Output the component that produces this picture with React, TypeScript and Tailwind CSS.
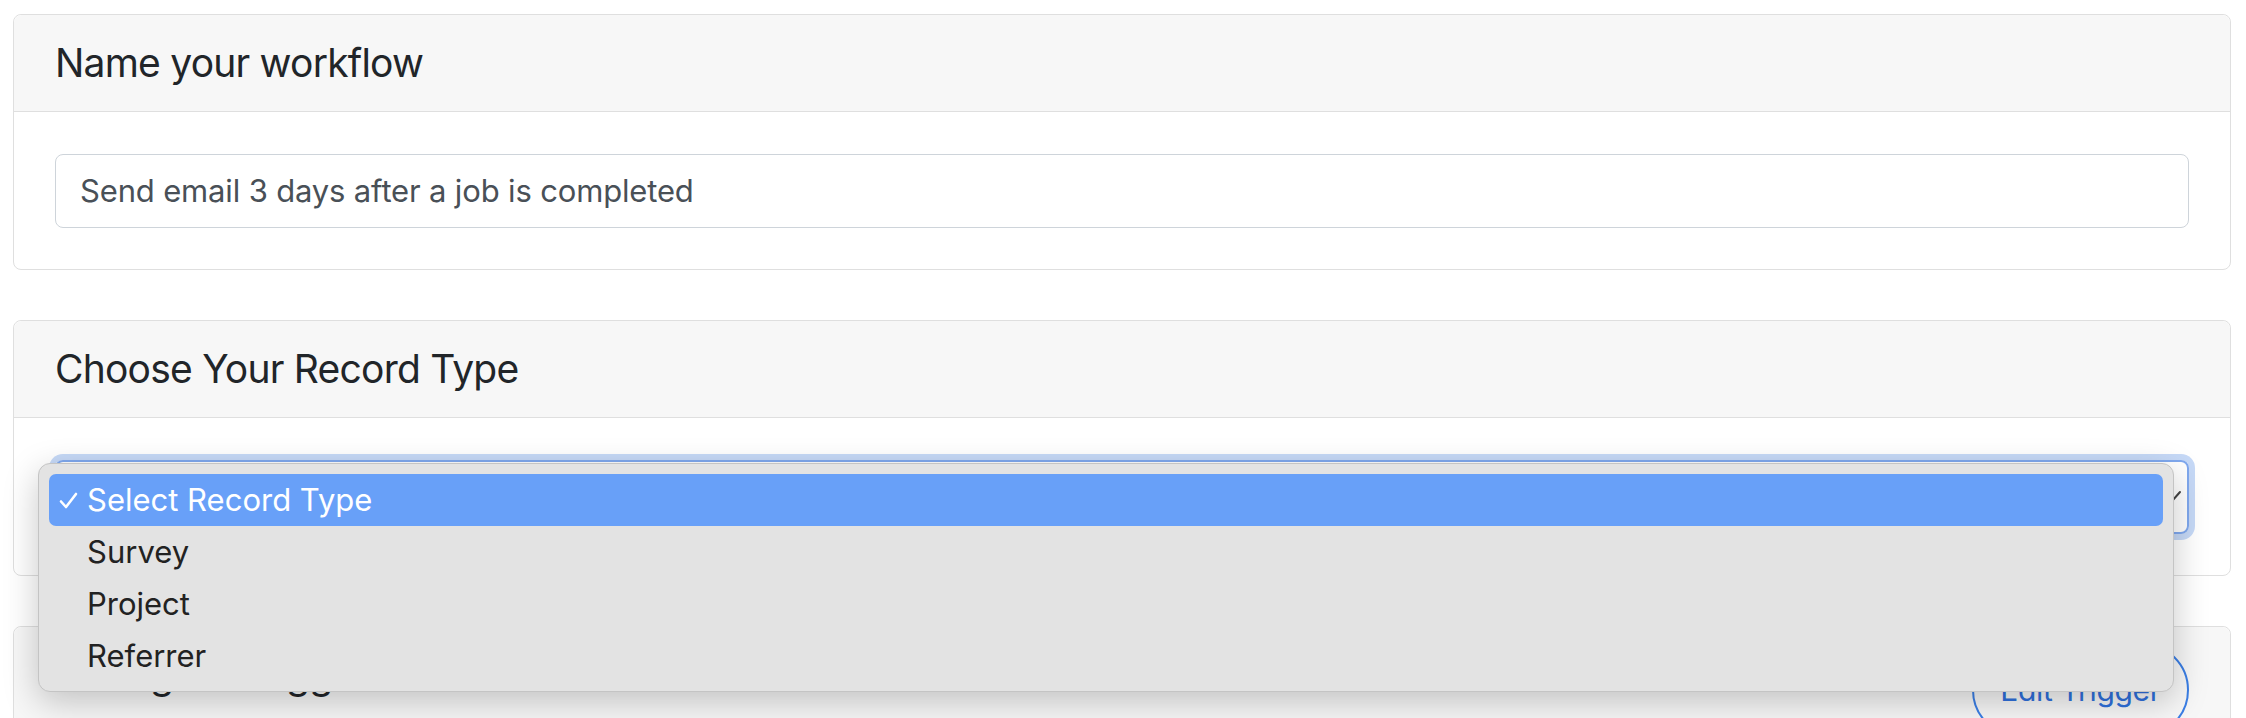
import React from 'react';

const options = ['Select Record Type', 'Survey', 'Project', 'Referrer'];

function CardHeader({ children }: { children: React.ReactNode }) {
    return (
        <div className="bg-[#f7f7f7] border-b border-[#dfdfdf] px-[41px] py-6 rounded-t-[8px]">
            <h5 className="text-[39px] leading-[48px] tracking-[-0.02em] text-[#212529]">{children}</h5>
        </div>
    );
}

export default function App() {
    return (
        <div className="min-h-screen bg-white pl-[13px] pr-[15px] pt-[14px] font-['Inter','Liberation_Sans',sans-serif] overflow-hidden h-[718px]">

            {/* Workflow name */}
            <div className="border border-[#dfdfdf] rounded-[8px] mb-[50px]">
                <CardHeader>Name your workflow</CardHeader>
                <div className="px-[41px] pt-[42px] pb-[41px]">
                    <div className="h-[74px] border border-[#ced4da] rounded-[8px] flex items-center pl-[24px] text-[31px] text-[#495057] tracking-[-0.005em]">
                        Send email 3 days after a job is completed
                    </div>
                </div>
            </div>

            {/* Record type */}
            <div className="border border-[#dfdfdf] rounded-[8px] mb-[50px]">
                <CardHeader>Choose Your Record Type</CardHeader>
                <div className="px-[41px] pt-[42px] pb-[41px]">
                    <div className="relative h-[74px] border-2 border-[#80a9ef] rounded-[8px] ring-[6px] ring-[#c6d9f7]">
                        <svg className="absolute right-[5px] top-[28px]" width="18" height="12" viewBox="0 0 18 12" fill="none">
                            <path d="M2 2l7 8 7-8" stroke="#444" strokeWidth="2" strokeLinecap="round" />
                        </svg>

                        {/* Native-looking open select menu */}
                        <div className="absolute left-[-19px] top-[1px] w-[2136px] h-[229px] bg-[#e3e3e3] border border-[#c4c4c4] rounded-[12px] shadow-[0_10px_35px_rgba(0,0,0,0.22)] p-[10px] z-10">
                            {options.map((o, i) => (
                                <div
                                    key={o}
                                    className={`h-[52px] flex items-center rounded-[7px] text-[31px] ${i === 0 ? 'bg-[#68a0f8] text-white' : 'text-[#222222]'}`}
                                >
                                    <span className="w-[38px] pl-[10px] flex items-center">
                                        {i === 0 && (
                                            <svg width="19" height="17" viewBox="0 0 19 17" fill="none">
                                                <path d="M2 9.5l5 5.5L17 2" stroke="white" strokeWidth="2.6" strokeLinecap="round" strokeLinejoin="round" />
                                            </svg>
                                        )}
                                    </span>
                                    {o}
                                </div>
                            ))}
                        </div>
                    </div>
                </div>
            </div>

            {/* Trigger */}
            <div className="border border-[#dfdfdf] rounded-[8px]">
                <div className="bg-[#f7f7f7] border-b border-[#dfdfdf] px-[41px] py-6 rounded-t-[8px] flex items-start justify-between">
                    <h5 className="text-[39px] leading-[48px] tracking-[-0.02em] text-[#212529]">Configure Trigger</h5>
                    <button className="-mt-[8px] h-[94px] w-[217px] rounded-full border-2 border-[#3b7fe6] text-[#2f70dc] text-[30px] tracking-[-0.01em] flex items-center justify-center">
                        Edit Trigger
                    </button>
                </div>
                <div className="h-[120px]"></div>
            </div>

        </div>
    );
}
